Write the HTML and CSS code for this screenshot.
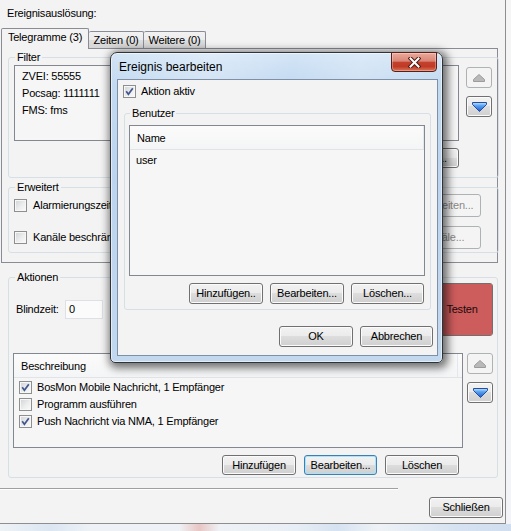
FILE: index.html
```html
<!DOCTYPE html>
<html lang="de">
<head>
<meta charset="utf-8">
<title>Ereignis bearbeiten</title>
<link rel="stylesheet" href="styles.css">
</head>
<body>
<div class="desktop">
  <div class="mainwin">
    <div class="cap-label">Ereignisauslösung:</div>
    <div class="tabctl">
      <div class="tabstrip">
        <div class="tab tab-active">Telegramme (3)</div>
        <div class="tab tab-zeiten">Zeiten (0)</div>
        <div class="tab tab-weitere">Weitere (0)</div>
      </div>
      <div class="tabpage">
        <fieldset class="grp grp-filter">
          <legend>Filter</legend>
          <div class="filter-inner">
            <div class="filter-main">
              <div class="listbox filter-list">
                <div class="lb-item">ZVEI: 55555</div>
                <div class="lb-item">Pocsag: 1111111</div>
                <div class="lb-item">FMS: fms</div>
              </div>
              <div class="updown">
                <button class="btn btn-sq" disabled><svg width="12" height="8" viewBox="0 0 12 8"><path d="M0.5 7.5 V5.5 L6 0.5 L11.5 5.5 V7.5 Z" fill="#b9b9b9" stroke="#9c9c9c"/></svg></button>
                <button class="btn btn-sq"><svg width="15" height="10" viewBox="0 0 15 10"><defs><linearGradient id="bla" x1="0" y1="0" x2="0" y2="1"><stop offset="0" stop-color="#c4e4ff"/><stop offset=".35" stop-color="#5aa4f4"/><stop offset="1" stop-color="#1c56c8"/></linearGradient></defs><path d="M0.5 0.5 H14.5 V2.5 L7.5 9.5 L0.5 2.5 Z" fill="url(#bla)" stroke="#234e9c"/></svg></button>
              </div>
            </div>
            <div class="btnrow filter-btns">
              <button class="btn">Hinzufügen...</button>
              <button class="btn">Bearbeiten...</button>
              <button class="btn">Löschen...</button>
            </div>
          </div>
        </fieldset>
        <fieldset class="grp grp-erw">
          <legend>Erweitert</legend>
          <div class="erw-inner">
            <div class="erw-row">
              <label class="chk"><span class="cb"></span>Alarmierungszeiten beschränken</label>
              <button class="btn" disabled>Bearbeiten...</button>
            </div>
            <div class="erw-row">
              <label class="chk"><span class="cb"></span>Kanäle beschränken</label>
              <button class="btn" disabled>Kanäle...</button>
            </div>
          </div>
        </fieldset>
      </div>
    </div>
    <fieldset class="grp grp-akt">
      <legend>Aktionen</legend>
      <div class="akt-inner">
        <div class="akt-top">
          <div class="blind"><span class="blind-label">Blindzeit:</span><span class="textbox">0</span></div>
          <button class="btn btn-test"><span class="test-fill">Testen</span></button>
        </div>
        <div class="akt-main">
          <div class="listview akt-list">
            <div class="lv-header"><span class="lv-col col-beschr">Beschreibung</span></div>
            <div class="lv-rows akt-rows">
              <div class="lv-row"><span class="cb"><svg width="11" height="11" viewBox="0 0 11 11"><path d="M2.2 5.2 L4.4 8.2 L8.8 2.2" fill="none" stroke="#42568f" stroke-width="1.7"/></svg></span>BosMon Mobile Nachricht, 1 Empfänger</div>
              <div class="lv-row"><span class="cb"></span>Programm ausführen</div>
              <div class="lv-row"><span class="cb"><svg width="11" height="11" viewBox="0 0 11 11"><path d="M2.2 5.2 L4.4 8.2 L8.8 2.2" fill="none" stroke="#42568f" stroke-width="1.7"/></svg></span>Push Nachricht via NMA, 1 Empfänger</div>
            </div>
          </div>
          <div class="updown">
            <button class="btn btn-sq" disabled><svg width="12" height="8" viewBox="0 0 12 8"><path d="M0.5 7.5 V5.5 L6 0.5 L11.5 5.5 V7.5 Z" fill="#b9b9b9" stroke="#9c9c9c"/></svg></button>
            <button class="btn btn-sq"><svg width="15" height="10" viewBox="0 0 15 10"><defs><linearGradient id="blb" x1="0" y1="0" x2="0" y2="1"><stop offset="0" stop-color="#c4e4ff"/><stop offset=".35" stop-color="#5aa4f4"/><stop offset="1" stop-color="#1c56c8"/></linearGradient></defs><path d="M0.5 0.5 H14.5 V2.5 L7.5 9.5 L0.5 2.5 Z" fill="url(#blb)" stroke="#234e9c"/></svg></button>
          </div>
        </div>
        <div class="btnrow akt-btns">
          <button class="btn">Hinzufügen</button>
          <button class="btn btn-def">Bearbeiten...</button>
          <button class="btn">Löschen</button>
        </div>
      </div>
    </fieldset>
    <div class="sep"></div>
    <div class="footer"><button class="btn btn-close">Schließen</button></div>
  </div>
  <div class="taskstrip"></div>

  <div class="dialog">
    <div class="titlebar">
      <span class="title">Ereignis bearbeiten</span>
      <span class="closebtn"><svg width="13" height="11" viewBox="0 0 13 11"><path d="M2.5 1.5 L10.5 9.5 M10.5 1.5 L2.5 9.5" stroke="#4a1a14" stroke-width="4" stroke-linecap="square"/><path d="M2.5 1.5 L10.5 9.5 M10.5 1.5 L2.5 9.5" stroke="#ffffff" stroke-width="2" stroke-linecap="square"/></svg></span>
    </div>
    <div class="client">
      <label class="chk dlg-chk"><span class="cb"><svg width="11" height="11" viewBox="0 0 11 11"><path d="M2.2 5.2 L4.4 8.2 L8.8 2.2" fill="none" stroke="#42568f" stroke-width="1.7"/></svg></span>Aktion aktiv</label>
      <fieldset class="grp grp-ben">
        <legend>Benutzer</legend>
        <div class="ben-inner">
          <div class="listview ben-list">
            <div class="lv-header"><span class="lv-col col-name">Name</span></div>
            <div class="lv-rows ben-rows">
              <div class="lv-row ben-row">user</div>
            </div>
          </div>
          <div class="btnrow ben-btns">
            <button class="btn w74">Hinzufügen..</button>
            <button class="btn w74">Bearbeiten...</button>
            <button class="btn w73">Löschen...</button>
          </div>
        </div>
      </fieldset>
      <div class="btnrow dlg-btns">
        <button class="btn w74">OK</button>
        <button class="btn w73">Abbrechen</button>
      </div>
    </div>
  </div>
</div>
</body>
</html>
```

FILE: styles.css
```css
* { box-sizing: border-box; }

html, body { margin: 0; padding: 0; }

body {
  font-family: "Liberation Sans", Arial, sans-serif;
  font-size: 11px;
  line-height: 13px;
  letter-spacing: -0.2px;
  color: #000;
  background: #f3f4f6;
}

.desktop {
  position: relative;
  width: 511px;
  height: 531px;
  overflow: hidden;
  display: flex;
  flex-direction: column;
  background: linear-gradient(180deg, #f5f5f5 0%, #f2f4f7 100%);
}

.mainwin {
  flex: none;
  width: 506px;
  height: 524px;
  background: #f3f3f3;
  border-right: 1px solid #8e8e8e;
  border-bottom: 1px solid #8e8e8e;
  display: flex;
  flex-direction: column;
}

.taskstrip {
  flex: 1;
  background: linear-gradient(90deg, #eef2f6 0%, #dbe6f2 10%, #eef2f6 18%, #eef2f6 35%, #e8c6c4 39%, #eef2f6 43%, #e8eef5 58%, #d6e2f1 66%, #eef2f6 74%, #d6e2f1 90%, #d0def0 100%);
}

.cap-label { margin: 7px 0 0 7px; }

/* ---------- tabs ---------- */
.tabctl { margin: 8px 0 0 1px; width: 497px; }

.tabstrip {
  display: flex;
  align-items: flex-end;
  height: 20px;
}

.tab {
  height: 17px;
  border: 1px solid #898c95;
  border-left: none;
  border-bottom: none;
  border-radius: 2px 2px 0 0;
  background: linear-gradient(180deg, #f2f2f2 0%, #ebebeb 50%, #dddddd 51%, #d6d6d6 100%);
  display: flex;
  align-items: center;
  justify-content: center;
  white-space: nowrap;
}

.tab-active {
  position: relative;
  z-index: 1;
  width: 88px;
  height: 21px;
  margin-bottom: -1px;
  padding-bottom: 3px;
  border-left: 1px solid #898c95;
  background: #f3f3f3;
}

.tab-zeiten { width: 55px; }
.tab-weitere { width: 62px; }

.tabpage {
  border: 1px solid #898c95;
  background: #f3f3f3;
  padding: 0 0 9px 3px;
}

/* ---------- group boxes ---------- */
.grp {
  margin: 0;
  padding: 0;
  min-width: 0;
  border: 1px solid #d5dfe5;
  border-radius: 3px;
}

.grp legend {
  padding: 0 2px;
  margin-left: 6px;
  line-height: 13px;
}

.grp-filter { margin: 2px 0 0 3px; width: 491px; }
.filter-inner { padding: 1px 0 9px 5px; }
.filter-main { display: flex; }

.listbox {
  border: 1px solid #828790;
  background: #f6f6f6;
}

.filter-list {
  flex: none;
  width: 445px;
  height: 76px;
  padding: 2px 0 0 7px;
}

.lb-item { height: 17px; line-height: 17px; white-space: nowrap; }

.updown {
  flex: none;
  display: flex;
  flex-direction: column;
  gap: 8px;
  margin-left: 7px;
  margin-top: 2px;
}

.btnrow {
  display: flex;
  justify-content: flex-end;
}

.filter-btns { margin-top: 7px; gap: 8px; padding-right: 39px; }
.filter-btns .btn { width: 73px; height: 20px; }

.grp-erw { margin: 3px 0 0 3px; width: 491px; }
.erw-inner {
  display: flex;
  flex-direction: column;
  gap: 9px;
  padding: 0 17px 3px 5px;
}
.erw-row {
  height: 23px;
  display: flex;
  align-items: center;
  justify-content: space-between;
}
.erw-row .btn { width: 75px; height: 23px; }

.chk {
  display: flex;
  align-items: center;
  gap: 6px;
  white-space: nowrap;
}

.cb {
  flex: none;
  width: 13px;
  height: 13px;
  border: 1px solid #8e8f8f;
  background: linear-gradient(135deg, #d0d2d5 0%, #eceded 55%, #fbfbfb 100%);
  box-shadow: inset 0 0 0 1px #f7f7f7;
  display: flex;
}

/* ---------- Aktionen ---------- */
.grp-akt { margin: 8px 0 0 8px; width: 490px; }
.akt-inner { padding: 0 4px 2px 4px; }
.akt-top {
  display: flex;
  justify-content: space-between;
  align-items: flex-start;
  margin-top: -1px;
}
.blind {
  display: flex;
  align-items: center;
  height: 19px;
  margin: 17px 0 0 3px;
}
.blind-label { width: 49px; }
.textbox {
  width: 38px;
  height: 19px;
  border: 1px solid #dde1e6;
  background: #fbfbfb;
  padding-left: 3px;
  display: flex;
  align-items: center;
}

.btn-test {
  width: 62px;
  height: 53px;
  margin-right: 2px;
  padding: 1px;
  background: #efefef;
}
.test-fill {
  flex: 1;
  align-self: stretch;
  background: #cd5c5c;
  border-radius: 1px;
  display: flex;
  align-items: center;
  justify-content: center;
  color: #1a0a0a;
}

.akt-main { display: flex; margin-top: 17px; }
.akt-main .updown { margin-left: 4px; margin-top: 0; }

.listview {
  flex: none;
  border: 1px solid #828790;
  background: #f6f6f6;
  display: flex;
  flex-direction: column;
}
.akt-list { width: 450px; height: 95px; }

.lv-header {
  flex: none;
  height: 24px;
  display: flex;
  border-bottom: 1px solid #e2e3e5;
  background: linear-gradient(180deg, #fbfbfb 0%, #f4f5f6 100%);
}
.lv-col {
  padding: 6px 0 0 7px;
  border-right: 1px solid #e3e8ee;
  white-space: nowrap;
}
.col-beschr { width: 444px; }
.col-name { flex: 1; }

.akt-rows { padding-top: 1px; }
.lv-row {
  height: 17px;
  line-height: 17px;
  display: flex;
  align-items: center;
  gap: 5px;
  padding-left: 5px;
  white-space: nowrap;
}

.akt-btns { margin-top: 7px; gap: 8px; padding-right: 34px; }
.akt-btns .btn { width: 74px; height: 20px; }
.akt-btns .btn-def { width: 73px; }

.sep {
  margin-top: 10px;
  width: 398px;
  height: 2px;
  border-top: 1px solid #a0a0a0;
  border-bottom: 1px solid #ffffff;
}

.footer {
  display: flex;
  justify-content: flex-end;
  margin-top: 7px;
  padding-right: 2px;
}
.btn-close { width: 74px; height: 21px; }

/* ---------- buttons ---------- */
.btn {
  flex: none;
  margin: 0;
  padding: 0;
  font: inherit;
  letter-spacing: inherit;
  line-height: 13px;
  color: #000;
  white-space: nowrap;
  border: 1px solid #707070;
  border-radius: 3px;
  background: linear-gradient(180deg, #f2f2f2 0%, #ebebeb 49%, #dddddd 50%, #cfcfcf 100%);
  box-shadow: inset 0 0 0 1px #fbfbfb;
  display: flex;
  align-items: center;
  justify-content: center;
}
.btn:disabled {
  color: #8a8a8a;
  border-color: #adb2b5;
  background: #f4f4f4;
  box-shadow: none;
}
.btn-def {
  border-color: #3c7fb1;
  box-shadow: inset 0 0 0 1px #a8e2fb;
}
.btn-sq { width: 26px; height: 21px; }

.w73 { width: 73px; }
.w74 { width: 74px; }

/* ---------- dialog ---------- */
.dialog {
  position: absolute;
  left: 110px;
  top: 52px;
  width: 333px;
  height: 311px;
  z-index: 5;
  display: flex;
  flex-direction: column;
  border: 1px solid #2f3438;
  border-radius: 7px 7px 5px 5px;
  background: linear-gradient(180deg, #d4e5f6 0%, #c3daf1 10%, #bcd4ee 40%, #c2d8ef 100%);
  box-shadow: inset 0 0 0 1px rgba(255, 255, 255, 0.55), 2px 2px 9px 3px rgba(0, 0, 0, 0.55);
}

.titlebar {
  flex: none;
  height: 26px;
  display: flex;
  justify-content: space-between;
  align-items: flex-start;
  padding: 0 5px 0 8px;
  background: linear-gradient(100deg, rgba(255,255,255,0) 0%, rgba(255,255,255,0.25) 30%, rgba(255,255,255,0) 55%, rgba(255,255,255,0.2) 75%, rgba(255,255,255,0) 100%);
}

.title {
  padding-top: 7px;
  font-size: 12px;
  line-height: 15px;
  letter-spacing: 0;
}

.closebtn {
  width: 46px;
  height: 20px;
  margin-top: -1px;
  border: 1px solid #5b1d16;
  border-radius: 0 0 4px 4px;
  background: linear-gradient(180deg, #e9aa9b 0%, #da8575 45%, #c4412d 52%, #c13a26 75%, #d8765a 100%);
  box-shadow: inset 0 0 0 1px rgba(255, 255, 255, 0.3);
  display: flex;
  align-items: center;
  justify-content: center;
}

.client {
  flex: 1;
  margin: 0 4px 6px 6px;
  border: 1px solid #7f90a6;
  background: #f3f3f3;
}

.dlg-chk { margin: 5px 0 0 5px; gap: 5px; height: 13px; }

.grp-ben { margin: 9px 0 0 6px; width: 307px; }
.grp-ben legend { margin-left: 5px; }
.ben-inner { padding: 5px 5px 5px 4px; }
.ben-list { height: 151px; }
.ben-rows { padding-top: 2px; }
.ben-row { padding-left: 6px; }
.ben-btns { margin-top: 7px; gap: 7px; padding-right: 1px; }
.ben-btns .btn { height: 21px; }

.dlg-btns { margin-top: 16px; gap: 7px; padding-right: 4px; }
.dlg-btns .btn { height: 21px; }
```
